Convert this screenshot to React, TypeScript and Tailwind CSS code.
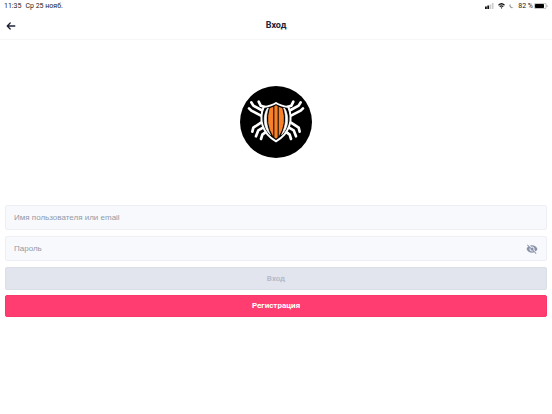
import { useState } from "react";

const font = "font-['Roboto','Liberation_Sans',sans-serif]";

function StatusBar() {
  return (
    <div className="flex h-3 items-center justify-between px-1 text-[7px] leading-3 text-[#222]">
      <div className="flex gap-1">
        <span>11:35</span>
        <span>Ср 25 нояб.</span>
      </div>
      <div className="flex items-center gap-1">
        <svg width="9" height="6" viewBox="0 0 9 6" aria-hidden="true">
          <rect x="0" y="3.5" width="1.8" height="2.5" fill="#111" />
          <rect x="2.3" y="2.5" width="1.8" height="3.5" fill="#111" />
          <rect x="4.6" y="1.5" width="1.6" height="4.5" fill="#ccc" />
          <rect x="6.9" y="0" width="1.6" height="6" fill="#ccc" />
        </svg>
        <svg width="7" height="6" viewBox="0 0 7 6" fill="none" stroke="#111" aria-hidden="true">
          <path d="M.5 2.2Q3.5-.7 6.5 2.2" strokeWidth="1.2" />
          <path d="M1.7 3.7Q3.5 2.1 5.3 3.7" strokeWidth="1.1" />
          <path d="M2.6 4.7L3.5 5.7 4.4 4.7Q3.5 4 2.6 4.7Z" fill="#111" stroke="none" />
        </svg>
        <svg width="5" height="6" viewBox="0 0 5 6" aria-hidden="true">
          <path d="M1.6.7A2.4 2.4 0 1 0 4.7 4.3 2.7 2.7 0 0 1 1.6.7Z" fill="#999" />
        </svg>
        <div className="flex items-center gap-px">
          <span>82 %</span>
          <svg width="14" height="6" viewBox="0 0 14 6" aria-hidden="true">
            <rect x=".3" y=".3" width="11.8" height="5.4" rx="1.5" fill="none" stroke="#888" strokeWidth=".6" />
            <rect x="1" y="1" width="9" height="4" rx=".8" fill="#000" />
            <path d="M12.8 2v2q.8-.3.8-1t-.8-1Z" fill="#888" />
          </svg>
        </div>
      </div>
    </div>
  );
}

function Legs() {
  return (
    <g fill="none" stroke="#fff" strokeWidth="8" strokeLinecap="round" strokeLinejoin="round">
      <path d="M86 71L92 83 103 86" />
      <path d="M64 73L70 83 94 96" />
      <path d="M57 91L64 98 93 113" />
      <path d="M93 134L70 149 67 161" />
      <path d="M99 149L85 157 78 175" />
      <path d="M106 163L97 170 93 183" />
    </g>
  );
}

function Logo() {
  return (
    <svg className="size-18" viewBox="30 24 216 216" role="img" aria-label="Логотип">
      <circle cx="138" cy="132" r="108" fill="#000" />
      <Legs />
      <g transform="translate(276 0) scale(-1 1)">
        <Legs />
      </g>
      <path
        d="M138 75C126 83 114 85 101 87C87 120 93 164 138 190C183 164 189 120 175 87C162 85 150 83 138 75Z"
        fill="#000"
        stroke="#fff"
        strokeWidth="6"
        strokeLinejoin="round"
      />
      <path d="M112 91C98 112 99 150 121 170C108 142 106 116 115 90Z" fill="#fff" stroke="#fff" strokeWidth="2" />
      <path d="M164 91C178 112 177 150 155 170C168 142 170 116 161 90Z" fill="#fff" stroke="#fff" strokeWidth="2" />
      <g fill="#f9802a">
        <path d="M119 91L130 86V176Q105 140 119 91Z" />
        <path d="M133 85L138 82 143 85V178L138 182 133 178Z" />
        <path d="M157 91L146 86V176Q171 140 157 91Z" />
      </g>
    </svg>
  );
}

export default function App() {
  const [visible, setVisible] = useState(false);
  const field =
    "block h-[25px] w-full rounded-xs border border-[#edeff5] bg-[#f8f9fd] px-2 font-['Liberation_Sans',sans-serif] text-[8px] text-[#555] outline-none placeholder:text-[#919aa8]";

  return (
    <div className={`min-h-screen bg-white ${font}`}>
      <StatusBar />
      <header className="grid h-7 grid-cols-3 items-center border-b border-[#f7f7f9] px-[6px]">
        <button type="button" aria-label="Назад" className="justify-self-start">
          <svg width="10" height="8" viewBox="0 0 10 8" fill="none" stroke="#20243a" strokeWidth="1.3" strokeLinecap="round" strokeLinejoin="round">
            <path d="M8.8 4H1.2M4.2 1L1.2 4l3 3" />
          </svg>
        </button>
        <h1 className="text-center text-[9px] font-bold text-[#20243a]">Вход</h1>
      </header>
      <main>
        <div className="flex justify-center pt-[46px] pb-[47px]">
          <Logo />
        </div>
        <form className="px-[5px]" onSubmit={(e) => e.preventDefault()}>
          <input className={field} type="text" aria-label="Имя пользователя или email" placeholder="Имя пользователя или email" />
          <div className="relative mt-[6px]">
            <input className={field} type={visible ? "text" : "password"} aria-label="Пароль" placeholder="Пароль" />
            <button
              type="button"
              aria-label="Показать пароль"
              className="absolute inset-y-0 right-[9px] flex items-center"
              onClick={() => setVisible(!visible)}
            >
              <svg width="12" height="12" viewBox="0 0 24 24" fill="#8992a8">
                <path d="M12 7c2.76 0 5 2.24 5 5 0 .65-.13 1.26-.36 1.83l2.92 2.92c1.51-1.26 2.7-2.89 3.43-4.75-1.73-4.39-6-7.5-11-7.5-1.4 0-2.74.25-3.98.7l2.16 2.16C10.74 7.13 11.35 7 12 7zM2 4.27l2.28 2.28.46.46C3.08 8.3 1.78 10.02 1 12c1.73 4.39 6 7.5 11 7.5 1.55 0 3.03-.3 4.38-.84l.42.42L19.73 22 21 20.73 3.27 3 2 4.27zM7.53 9.8l1.55 1.55c-.05.21-.08.43-.08.65 0 1.66 1.34 3 3 3 .22 0 .44-.03.65-.08l1.55 1.55c-.67.33-1.41.53-2.2.53-2.76 0-5-2.24-5-5 0-.79.2-1.53.53-2.2z" />
                <circle cx="12.5" cy="11.8" r="2.6" />
              </svg>
            </button>
          </div>
          <button type="submit" disabled className="mt-[6px] flex h-[23px] w-full items-center justify-center rounded-xs border border-[#dadee7] bg-[#e2e5ed] pt-px text-[8px] leading-none font-bold text-[#b6bccb]">
            Вход
          </button>
          <button type="button" className="mt-[5px] flex h-[22px] w-full items-center justify-center rounded-xs border border-[#f8376b] bg-[#ff3d71] text-[8px] leading-none font-bold text-white">
            Регистрация
          </button>
        </form>
      </main>
    </div>
  );
}
